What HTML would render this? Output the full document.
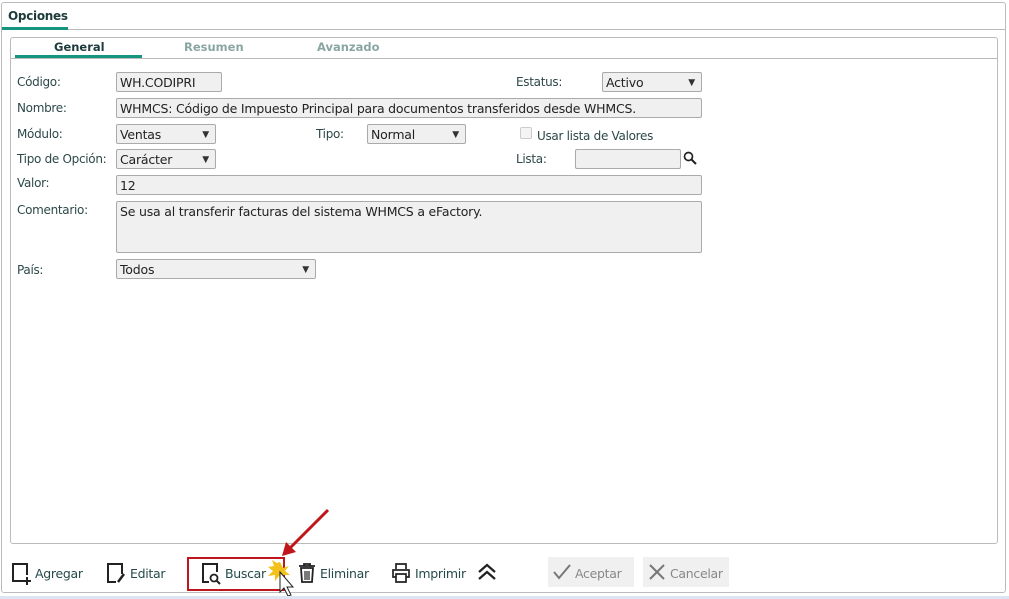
<!DOCTYPE html>
<html><head><meta charset="utf-8"><style>
*{box-sizing:border-box;margin:0;padding:0}
body{width:1009px;height:599px;background:#fff;font-family:"DejaVu Sans","Liberation Sans",sans-serif;font-size:12px;color:#333;position:relative;overflow:hidden}
.a{position:absolute}
.outer{left:1px;top:2px;width:1005px;height:591px;border:1px solid #bbb;border-radius:3px}
.inner{left:10px;top:37px;width:988px;height:507px;border:1px solid #bbb;border-radius:3px}
.lbl{font-size:12px;color:#2d4848;letter-spacing:-0.3px}
.inp{background:#f0f0f0;border:1px solid #aaa;border-radius:2px;font-size:12.5px;color:#222;padding:1px 3px;height:20px;line-height:17px;letter-spacing:-0.2px;white-space:nowrap;overflow:hidden}
.sel:after{content:"▼";position:absolute;right:6px;top:2px;font-size:9px;color:#333}
.tb{font-size:12.5px;color:#264a4a;letter-spacing:-0.3px}
</style></head><body>
<div class="a outer"></div>
<div class="a" style="left:2px;top:29px;width:1003px;border-top:1px solid #bbb"></div>
<div class="a" style="left:8px;top:9px;font-weight:bold;font-size:12px;color:#1d3b3b;letter-spacing:-0.3px">Opciones</div>
<div class="a" style="left:2px;top:27px;width:66px;height:3px;background:#15947f"></div>
<div class="a inner"></div>
<div class="a" style="left:11px;top:58px;width:986px;border-top:1px solid #bbb"></div>
<div class="a" style="left:54px;top:40px;font-weight:bold;font-size:11.5px;color:#1d3b3b">General</div>
<div class="a" style="left:184px;top:40px;font-weight:bold;font-size:11.5px;color:#8aa6a4">Resumen</div>
<div class="a" style="left:317px;top:40px;font-weight:bold;font-size:11.5px;color:#8aa6a4">Avanzado</div>
<div class="a" style="left:15px;top:55px;width:127px;height:3px;background:#15947f"></div>

<div class="a lbl" style="left:17px;top:75px">Código:</div>
<div class="a inp" style="left:116px;top:72px;width:106px">WH.CODIPRI</div>
<div class="a lbl" style="left:516px;top:75px">Estatus:</div>
<div class="a inp sel" style="left:602px;top:72px;width:100px">Activo</div>

<div class="a lbl" style="left:17px;top:101px">Nombre:</div>
<div class="a inp" style="left:116px;top:98px;width:586px">WHMCS: Código de Impuesto Principal para documentos transferidos desde WHMCS.</div>

<div class="a lbl" style="left:17px;top:127px">Módulo:</div>
<div class="a inp sel" style="left:116px;top:124px;width:100px">Ventas</div>
<div class="a lbl" style="left:316px;top:127px">Tipo:</div>
<div class="a inp sel" style="left:367px;top:124px;width:99px">Normal</div>
<div class="a" style="left:520px;top:127px;width:12px;height:12px;border:1px solid #ccc;border-radius:2px;background:#f4f4f4"></div>
<div class="a lbl" style="left:537px;top:129px">Usar lista de Valores</div>

<div class="a lbl" style="left:17px;top:152px">Tipo de Opción:</div>
<div class="a inp sel" style="left:116px;top:149px;width:100px">Carácter</div>
<div class="a lbl" style="left:516px;top:152px">Lista:</div>
<div class="a inp" style="left:575px;top:149px;width:106px"></div>
<svg class="a" style="left:683px;top:151px" width="14" height="14" viewBox="0 0 14 14"><circle cx="5.5" cy="5.5" r="4" fill="none" stroke="#222" stroke-width="1.7"/><path d="M8.5 8.5L13 13" stroke="#222" stroke-width="2"/></svg>

<div class="a lbl" style="left:17px;top:176px">Valor:</div>
<div class="a inp" style="left:116px;top:175px;width:586px">12</div>

<div class="a lbl" style="left:17px;top:203px">Comentario:</div>
<div class="a inp" style="left:116px;top:201px;width:586px;height:52px">Se usa al transferir facturas del sistema WHMCS a eFactory.</div>

<div class="a lbl" style="left:17px;top:263px">País:</div>
<div class="a inp sel" style="left:116px;top:259px;width:200px">Todos</div>

<!-- toolbar -->
<svg class="a" style="left:11px;top:562px" width="22" height="24" viewBox="0 0 22 24"><path d="M12 19H2V2h14v11" fill="none" stroke="#222" stroke-width="2"/><path d="M16 15v8M12 19h8" stroke="#222" stroke-width="2"/></svg>
<div class="a tb" style="left:35px;top:566px">Agregar</div>
<svg class="a" style="left:106px;top:562px" width="22" height="24" viewBox="0 0 22 24"><path d="M10 20H2V2h14v10" fill="none" stroke="#222" stroke-width="2"/><path d="M18 12l-6 8" stroke="#222" stroke-width="2.5"/></svg>
<div class="a tb" style="left:130px;top:566px">Editar</div>
<div class="a" style="left:187px;top:557px;width:98px;height:34px;border:2px solid #c0151b"></div>
<svg class="a" style="left:201px;top:562px" width="22" height="24" viewBox="0 0 22 24"><path d="M8 20H2V2h14v8" fill="none" stroke="#222" stroke-width="2"/><circle cx="13" cy="16" r="3.5" fill="none" stroke="#222" stroke-width="1.8"/><path d="M15.5 18.5L19 22" stroke="#222" stroke-width="2"/></svg>
<div class="a tb" style="left:225px;top:566px">Buscar</div>
<svg class="a" style="left:268px;top:500px" width="70" height="99" viewBox="0 0 70 99"><path d="M60 10L22 48" stroke="#c0151b" stroke-width="3"/><path d="M14 56l4-14 10 10z" fill="#c0151b"/><path d="M12 62l3 6 6-2-4 5 5 4-7 0 1 6-5-5-4 5 0-6-7 1 5-5-5-4 6-1-2-6 5 3z" fill="#f2c21a"/><path d="M12 72v20l4-4 4 8 3-1-4-8h6z" fill="#fff" stroke="#222" stroke-width="1"/></svg>
<svg class="a" style="left:297px;top:562px" width="20" height="22" viewBox="0 0 20 22"><path d="M2 4h16M7 4V2h6v2M4 6h12l-1 14H5z" fill="none" stroke="#222" stroke-width="1.8"/><path d="M8 9v9M10 9v9M12 9v9" stroke="#222" stroke-width="1.2"/></svg>
<div class="a tb" style="left:320px;top:566px">Eliminar</div>
<svg class="a" style="left:391px;top:562px" width="20" height="22" viewBox="0 0 20 22"><path d="M5 7V2h10v5M5 15H2V8h16v7h-3M5 12h10v8H5z" fill="none" stroke="#222" stroke-width="1.7"/></svg>
<div class="a tb" style="left:415px;top:566px">Imprimir</div>
<svg class="a" style="left:477px;top:563px" width="20" height="18" viewBox="0 0 20 18"><path d="M2 9l8-7 8 7M2 16l8-7 8 7" fill="none" stroke="#222" stroke-width="2.2"/></svg>
<div class="a" style="left:548px;top:557px;width:86px;height:30px;background:#f0f0f0"></div>
<svg class="a" style="left:552px;top:563px" width="20" height="18" viewBox="0 0 20 18"><path d="M2 9l5 6L18 2" fill="none" stroke="#777" stroke-width="2"/></svg>
<div class="a tb" style="left:575px;top:566px;color:#888">Aceptar</div>
<div class="a" style="left:643px;top:557px;width:86px;height:30px;background:#f0f0f0"></div>
<svg class="a" style="left:648px;top:563px" width="18" height="18" viewBox="0 0 18 18"><path d="M2 2l14 14M16 2L2 16" stroke="#777" stroke-width="2"/></svg>
<div class="a tb" style="left:670px;top:566px;color:#888">Cancelar</div>
<div class="a" style="left:0;top:596px;width:1009px;height:3px;background:#dce6f2"></div>
</body></html>
